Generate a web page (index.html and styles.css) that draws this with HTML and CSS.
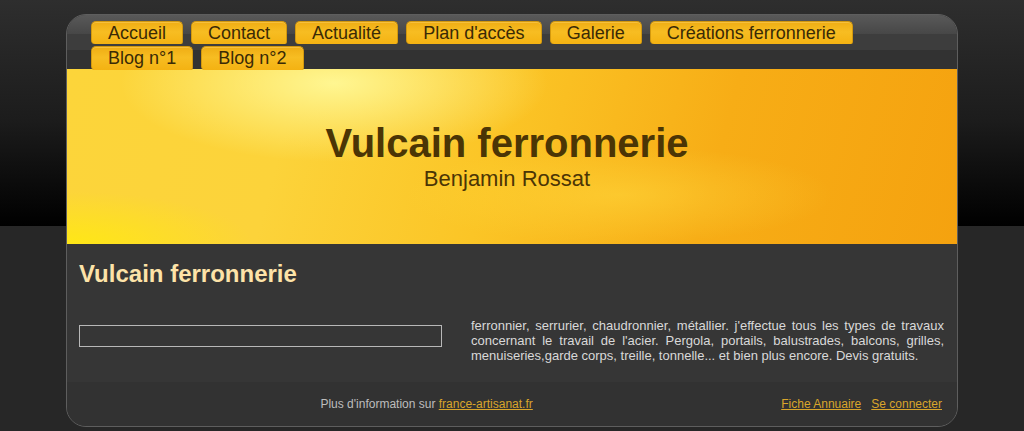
FILE: index.html
```html
<!DOCTYPE html>
<html lang="fr">
<head>
<meta charset="utf-8">
<title>Vulcain ferronnerie</title>
<link rel="stylesheet" href="styles.css">
</head>
<body>
<div class="page">
  <div class="site">
    <nav class="nav">
      <ul class="tabs">
        <li class="tab">Accueil</li>
        <li class="tab">Contact</li>
        <li class="tab">Actualité</li>
        <li class="tab">Plan d'accès</li>
        <li class="tab">Galerie</li>
        <li class="tab">Créations ferronnerie</li>
        <li class="tab">Blog n°1</li>
        <li class="tab">Blog n°2</li>
      </ul>
    </nav>
    <header class="banner">
      <h1 class="banner-title">Vulcain ferronnerie</h1>
      <p class="banner-sub">Benjamin Rossat</p>
    </header>
    <main class="content">
      <h2 class="content-title">Vulcain ferronnerie</h2>
      <div class="cols">
        <div class="field"></div>
        <p class="desc">ferronnier, serrurier, chaudronnier, métallier. j'effectue tous les types de travaux concernant le travail de l'acier. Pergola, portails, balustrades, balcons, grilles, menuiseries,garde corps, treille, tonnelle... et bien plus encore. Devis gratuits.</p>
      </div>
    </main>
    <footer class="footer">
      <div class="footer-info">Plus d'information sur <a class="link" href="#">france-artisanat.fr</a></div>
      <div class="footer-links"><a class="link" href="#">Fiche Annuaire</a><a class="link" href="#">Se connecter</a></div>
    </footer>
  </div>
</div>
</body>
</html>
```

FILE: styles.css
```css
html, body {
  margin: 0;
  padding: 0;
}
body {
  font-family: "Liberation Sans", Arial, sans-serif;
  background: linear-gradient(to bottom, #2e2e2e 0px, #1c1c1c 120px, #000 226px, #272727 226px, #272727 100%);
  min-height: 431px;
}
.page {
  padding-top: 14px;
}
.site {
  width: 890px;
  margin: 0 auto;
  border: 1px solid #5e5e5e;
  border-radius: 20px;
  overflow: hidden;
  background: #363636;
}
.nav {
  height: 54px;
  background: linear-gradient(to bottom, #595959 0px, #474747 19px, #3d3d3d 19px, #3d3d3d 35px, #323232 35px);
  padding: 6px 0 0 24px;
  box-sizing: border-box;
}
.tabs {
  list-style: none;
  margin: 0;
  padding: 0;
  display: flex;
  flex-wrap: wrap;
  column-gap: 8px;
  row-gap: 2px;
  width: 790px;
}
.tab {
  height: 22px;
  line-height: 22px;
  padding: 0 16px;
  font-size: 18px;
  color: #3a2a06;
  background: linear-gradient(to bottom, #efad14 0%, #f7bd22 45%, #f4b212 100%);
  border: 1px solid #d2980e;
  border-bottom: none;
  border-radius: 5px 5px 2px 4px;
  box-shadow: inset 0 1px 0 rgba(255, 215, 110, 0.45);
}
.tab:nth-child(n+7) {
  height: 23px;
}
.banner {
  height: 175px;
  display: flex;
  flex-direction: column;
  align-items: center;
  justify-content: center;
  padding: 0 10px 3px 0;
  box-sizing: border-box;
  background:
    radial-gradient(ellipse 32% 60% at 30% 8%, rgba(255, 248, 150, 0.95), rgba(255, 240, 120, 0) 75%),
    radial-gradient(ellipse 28% 40% at 0% 100%, rgba(255, 232, 20, 0.95), rgba(255, 232, 20, 0) 75%),
    radial-gradient(ellipse 30% 35% at 62% 72%, rgba(255, 215, 60, 0.55), rgba(255, 215, 60, 0) 80%),
    linear-gradient(105deg, #fcd53a 0%, #fcd33a 25%, #fbc526 48%, #f7ad16 72%, #f5a20f 100%);
}
.banner-title {
  margin: 0;
  font-size: 40px;
  line-height: 46px;
  font-weight: bold;
  color: #4b3505;
}
.banner-sub {
  margin: 0;
  font-size: 22px;
  line-height: 25px;
  color: #4b3505;
}
.content {
  padding: 16px 13px 19px 12px;
  background: #363636;
}
.content-title {
  margin: 0;
  font-size: 24px;
  line-height: 28px;
  font-weight: bold;
  color: #fde3a8;
}
.cols {
  margin-top: 30px;
  display: grid;
  grid-template-columns: 363px 1fr;
  column-gap: 29px;
  align-items: start;
}
.field {
  margin-top: 7px;
  height: 20px;
  border: 1px solid #b8b8b8;
}
.desc {
  margin: 0;
  font-size: 13px;
  line-height: 15px;
  color: #d9d9d9;
  text-align: justify;
}
.footer {
  height: 44px;
  background: #323232;
  display: grid;
  grid-template-columns: 1fr auto;
  column-gap: 7px;
  align-items: center;
  padding: 0 15px 0 12px;
  font-size: 12px;
  color: #bdbdbd;
}
.footer-info {
  text-align: center;
}
.footer-links {
  display: flex;
  gap: 10px;
}
.link {
  color: #d9a52b;
  text-decoration: underline;
}
```
